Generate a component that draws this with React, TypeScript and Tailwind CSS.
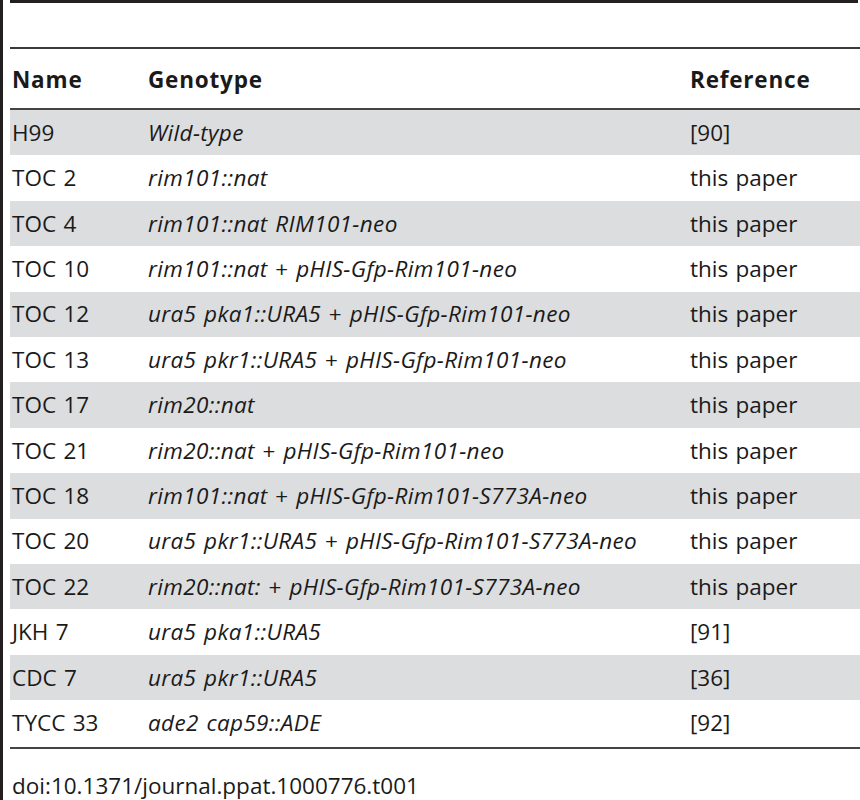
const rows: [string, string, string][] = [
  ["H99", "Wild-type", "[90]"],
  ["TOC 2", "rim101::nat", "this paper"],
  ["TOC 4", "rim101::nat RIM101-neo", "this paper"],
  ["TOC 10", "rim101::nat + pHIS-Gfp-Rim101-neo", "this paper"],
  ["TOC 12", "ura5 pka1::URA5 + pHIS-Gfp-Rim101-neo", "this paper"],
  ["TOC 13", "ura5 pkr1::URA5 + pHIS-Gfp-Rim101-neo", "this paper"],
  ["TOC 17", "rim20::nat", "this paper"],
  ["TOC 21", "rim20::nat + pHIS-Gfp-Rim101-neo", "this paper"],
  ["TOC 18", "rim101::nat + pHIS-Gfp-Rim101-S773A-neo", "this paper"],
  ["TOC 20", "ura5 pkr1::URA5 + pHIS-Gfp-Rim101-S773A-neo", "this paper"],
  ["TOC 22", "rim20::nat: + pHIS-Gfp-Rim101-S773A-neo", "this paper"],
  ["JKH 7", "ura5 pka1::URA5", "[91]"],
  ["CDC 7", "ura5 pkr1::URA5", "[36]"],
  ["TYCC 33", "ade2 cap59::ADE", "[92]"],
];

// genotype text: italic, but the "+" joining parts stays upright
const Genotype = ({ text }: { text: string }) => {
  const parts = text.split(" + ");
  return (
    <span className="tracking-[0.35px]">
      {parts.map((p, i) => (
        <span key={i}>
          {i > 0 && <span className="not-italic"> + </span>}
          <span className="italic">{p}</span>
        </span>
      ))}
    </span>
  );
};

export default function App() {
  return (
    <div
      className="w-[860px] h-[800px] overflow-hidden bg-white flex text-[#1a1a1a] text-[22.5px] [word-spacing:1.5px]"
      style={{ fontFamily: '"Open Sans", "Liberation Sans", sans-serif' }}
    >
      {/* left rule */}
      <div className="w-[3px] h-full bg-[#231f20] shrink-0" />

      <div className="flex-1 flex flex-col pl-[7px]">
        {/* top thick rule */}
        <div className="h-[3px] bg-[#231f20] mr-[2px]" />
        <div className="h-[44px]" />
        <div className="h-[2px] bg-[#3a3a3a]" />

        {/* Header */}
        <div className="h-[59px] grid grid-cols-[136px_542px_1fr] items-center pl-[2px] pt-[2px] font-bold tracking-[0.8px]">
          <div>Name</div>
          <div>Genotype</div>
          <div>Reference</div>
        </div>
        <div className="h-[2px] bg-[#444444]" />

        {/* Body */}
        <div className="flex flex-col">
          {rows.map((r, i) => (
            <div
              key={r[0]}
              className={`h-[45.4px] grid grid-cols-[136px_542px_1fr] items-center pl-[2px] ${
                i % 2 === 0 ? "bg-[#dcdddf]" : "bg-white"
              }`}
            >
              <div>{r[0]}</div>
              <div>
                <Genotype text={r[1]} />
              </div>
              <div>{r[2]}</div>
            </div>
          ))}
        </div>
        <div className="h-[2px] mt-[2px] bg-[#444444]" />

        {/* Footer */}
        <div className="flex-1 flex items-end pl-[2px] pb-[3px] leading-none">
          doi:10.1371/journal.ppat.1000776.t001
        </div>
      </div>
    </div>
  );
}
